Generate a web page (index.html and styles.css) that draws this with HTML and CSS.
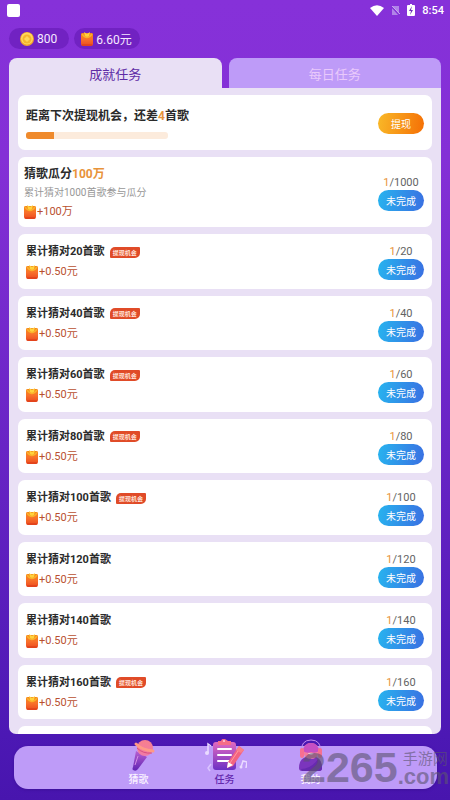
FILE: index.html
```html
<!DOCTYPE html>
<html lang="zh-CN">
<head>
<meta charset="utf-8">
<meta name="viewport" content="width=device-width, initial-scale=1">
<title>成就任务</title>
<link rel="stylesheet" href="styles.css">
</head>
<body>
<svg class="defs" aria-hidden="true">
  <defs>
    <linearGradient id="packetFill" x1="0" y1="0" x2="0" y2="1"><stop offset="0" stop-color="#f98a1c"/><stop offset=".5" stop-color="#f8702a"/><stop offset="1" stop-color="#ec4a20"/></linearGradient>
    <linearGradient id="purpleFill" x1="0" y1="0" x2="0" y2="1"><stop offset="0" stop-color="#e26ac0"/><stop offset="1" stop-color="#6c30c4"/></linearGradient>
    <linearGradient id="handleFill" x1="0" y1="0" x2="0" y2="1"><stop offset="0" stop-color="#b85fd0"/><stop offset="1" stop-color="#5f23b4"/></linearGradient>
    <linearGradient id="pinkFill" x1="0" y1="0" x2="0" y2="1"><stop offset="0" stop-color="#f8808c"/><stop offset="1" stop-color="#f07aa8"/></linearGradient>
    <symbol id="packet" viewBox="0 0 12 14">
      <rect x="0" y="1" width="12" height="13" rx="2" fill="url(#packetFill)"/>
      <path d="M0 3Q0 1 2 1H10Q12 1 12 3Q10 6 6 6Q2 6 0 3Z" fill="#f4861b"/>
      <path d="M1 2Q6 9 11 2" fill="none" stroke="#fbb02c" stroke-width="1.4"/>
      <path d="M3 0L6 2L9 0L8 4L6 5L4 4Z" fill="#ffd23c"/>
      <path d="M1 13H11" stroke="#d93a16" stroke-width="1"/>
    </symbol>
  </defs>
</svg>
<div class="app">
  <div class="status">
    <span class="status-app"></span>
    <div class="status-icons">
      <svg width="14" height="11" viewBox="0 0 14 11"><path d="M0 3Q7-2.600 14 3L7 11Z" fill="#fff"/></svg>
      <svg width="9" height="11" viewBox="0 0 9 11"><path d="M2 1H8V10H1V4Z" fill="#b184e8"/><path d="M0 1L9 11" stroke="#8430d8" stroke-width="1.500"/><path d="M1 1L9 9" stroke="#c7a5f0"/></svg>
      <svg width="8" height="12" viewBox="0 0 8 12"><path d="M2 1H3V0H5V1H7Q8 1 8 2V11Q8 12 7 12H1Q0 12 0 11V2Q0 1 1 1Z" fill="#fff"/><path d="M5 2L2 7H4L3 11L6 6H4Z" fill="#6f2cb8"/></svg>
      <span>8:54</span>
    </div>
  </div>
  <header class="wallet">
    <span class="pill"><svg width="14" height="14" viewBox="0 0 14 14"><circle cx="7" cy="7" r="7" fill="#f0a22c"/><circle cx="7" cy="6.500" r="6" fill="#ffd85b"/><circle cx="7" cy="7" r="4.500" fill="#f6b62e"/><path d="M7 4L10 7L7 10L4 7Z" fill="#ffd75a"/></svg>800</span>
    <span class="pill"><svg width="12" height="14"><use href="#packet"/></svg>6.60元</span>
  </header>
  <div class="tabs">
    <button class="tab tab-active">成就任务</button>
    <button class="tab">每日任务</button>
  </div>
  <main class="panel">
    <section class="card next">
      <div>
        <h2><label for="next-progress">距离下次提现机会，还差<em>4</em>首歌</label></h2>
        <progress id="next-progress" value="20" max="100"></progress>
      </div>
      <button class="action withdraw">提现</button>
    </section>
    <section class="card share">
      <div>
        <h2>猜歌瓜分<em>100万</em></h2>
        <p class="note">累计猜对1000首歌参与瓜分</p>
        <p class="reward"><svg width="12" height="14"><use href="#packet"/></svg>+100万</p>
      </div>
      <div class="side"><span class="count"><em>1</em>/1000</span><button class="action">未完成</button></div>
    </section>
    <div class="list">
      <section class="card"><div><h2>累计猜对20首歌<span class="tag">提现机会</span></h2><p class="reward"><svg width="12" height="14"><use href="#packet"/></svg>+0.50元</p></div><div class="side"><span class="count"><em>1</em>/20</span><button class="action">未完成</button></div></section>
      <section class="card"><div><h2>累计猜对40首歌<span class="tag">提现机会</span></h2><p class="reward"><svg width="12" height="14"><use href="#packet"/></svg>+0.50元</p></div><div class="side"><span class="count"><em>1</em>/40</span><button class="action">未完成</button></div></section>
      <section class="card"><div><h2>累计猜对60首歌<span class="tag">提现机会</span></h2><p class="reward"><svg width="12" height="14"><use href="#packet"/></svg>+0.50元</p></div><div class="side"><span class="count"><em>1</em>/60</span><button class="action">未完成</button></div></section>
      <section class="card"><div><h2>累计猜对80首歌<span class="tag">提现机会</span></h2><p class="reward"><svg width="12" height="14"><use href="#packet"/></svg>+0.50元</p></div><div class="side"><span class="count"><em>1</em>/80</span><button class="action">未完成</button></div></section>
      <section class="card"><div><h2>累计猜对100首歌<span class="tag">提现机会</span></h2><p class="reward"><svg width="12" height="14"><use href="#packet"/></svg>+0.50元</p></div><div class="side"><span class="count"><em>1</em>/100</span><button class="action">未完成</button></div></section>
      <section class="card"><div><h2>累计猜对120首歌</h2><p class="reward"><svg width="12" height="14"><use href="#packet"/></svg>+0.50元</p></div><div class="side"><span class="count"><em>1</em>/120</span><button class="action">未完成</button></div></section>
      <section class="card"><div><h2>累计猜对140首歌</h2><p class="reward"><svg width="12" height="14"><use href="#packet"/></svg>+0.50元</p></div><div class="side"><span class="count"><em>1</em>/140</span><button class="action">未完成</button></div></section>
      <section class="card"><div><h2>累计猜对160首歌<span class="tag">提现机会</span></h2><p class="reward"><svg width="12" height="14"><use href="#packet"/></svg>+0.50元</p></div><div class="side"><span class="count"><em>1</em>/160</span><button class="action">未完成</button></div></section>
    </div>
    <div class="peek"></div>
  </main>
  <nav class="nav">
    <a href="#guess"><svg width="44" height="34" viewBox="0 0 44 34">
      <path d="M19 12L30 18L21 30Q19 33 16 31Q15 30 16 28Z" fill="url(#handleFill)"/>
      <circle cx="28" cy="9" r="8" fill="url(#pinkFill)"/>
      <path d="M20 9Q26 15 35 14" fill="none" stroke="#d94f80" stroke-width="1"/>
      <path d="M19 5Q25 11 36 12" fill="none" stroke="#ff9a86" stroke-width="3" stroke-linecap="round"/>
      <path d="M21 17L18 26" stroke="#d28ce4" stroke-width="1"/>
    </svg>猜歌</a>
    <a href="#tasks" class="current"><svg width="44" height="34" viewBox="0 0 44 34">
      <rect x="10" y="3" width="23" height="28" rx="3" fill="url(#purpleFill)"/>
      <path d="M15 2H18Q19-1 22 0L25 2H28V6H15Z" fill="#f56c88"/><circle cx="21" cy="2" r="1" fill="#ffd1da"/>
      <path d="M15 10H28M15 16H28M15 22H26" stroke="#fff" stroke-width="2" stroke-linecap="round"/>
      <path d="M36 7L41 11L30 27L24 29L25 23Z" fill="#f36380"/><path d="M36 7L41 11L38 14L33 11Z" fill="#f9808a"/><path d="M25 23L30 26L24 29Z" fill="#fff"/>
      <path d="M35 12L27 24" stroke="#ff9ba2" stroke-width="1"/>
      <path d="M5 14V5L8 7" fill="none" stroke="#eadbff" stroke-width="1.500"/><circle cx="4" cy="14" r="2" fill="#eadbff"/>
      <path d="M7 32L5 29L8 25" fill="none" stroke="#dac4ff" stroke-width="1.500"/>
      <path d="M38 28L40 22L44 23L43 29" fill="none" stroke="#eadbff" stroke-width="1.500"/><circle cx="38" cy="28" r="1.500" fill="#eadbff"/>
    </svg>任务</a>
    <a href="#mine"><svg width="44" height="34" viewBox="0 0 44 34">
      <path d="M10 29Q10 20 17 18H27Q33 20 33 29Q33 32 30 32H13Q10 32 10 29Z" fill="#7b35bd"/>
      <path d="M12 30Q22 30 29 20Q33 23 33 29Q33 32 30 32H13Z" fill="#672ab0"/>
      <circle cx="22" cy="12" r="8" fill="url(#pinkFill)"/>
      <path d="M14 12Q15 4 22 4Q29 4 30 12Q26 15 22 13Q18 15 14 12Z" fill="#c74fc4"/>
      <path d="M12 13Q12 1 22 1Q32 1 32 13" fill="none" stroke="#c58cf0" stroke-width="1"/>
      <rect x="11" y="9" width="4" height="10" rx="2" fill="#f76f92"/><rect x="29" y="9" width="4" height="10" rx="2" fill="#f76f92"/>
      <path d="M19 14H25Q22 18 19 14Z" fill="#ffe1f4"/>
    </svg>我的</a>
    <div class="mark" aria-hidden="true"><span class="mark-num">2265</span><span class="mark-side"><span class="mark-cn">手游网</span><span class="mark-com">.com</span></span></div>
  </nav>
</div>
</body>
</html>
```
FILE: styles.css
```css
* { box-sizing: border-box; }
body {
  margin: 0;
  font-family: Roboto, "Noto Sans CJK SC", sans-serif;
  font-size: 11px;
  color: #2b2b2b;
}
h2, p { margin: 0; }
em { font-style: normal; color: #e8933a; }
svg { display: block; flex: none; }
button { border: 0; padding: 0; font-family: inherit; }
.defs { position: absolute; width: 0; height: 0; }

.app {
  height: 100vh;
  min-height: 640px;
  display: flex;
  flex-direction: column;
  padding: 0 9px 11px;
  background: linear-gradient(#8631d9 0%, #8430d6 20%, #4c18b4 92%, #4815ae 100%);
}

.status {
  height: 20px;
  display: flex;
  align-items: center;
  justify-content: space-between;
  color: #fff;
}
.status-app {
  width: 13px;
  height: 13px;
  margin-left: -2px;
  border-radius: 2px;
  background: #fff;
}
.status-icons {
  display: flex;
  align-items: center;
  gap: 7px;
  padding-right: -0px;
  margin-right: -3px;
  font-size: 11px;
  font-weight: 500;
}

.wallet { display: flex; gap: 5px; margin: 8px 0 9px; }
.pill {
  height: 21px;
  display: flex;
  align-items: center;
  gap: 3px;
  padding: 0 12px 0 11px;
  border-radius: 11px;
  background: #7122c2;
  color: #f6eaff;
  font-size: 12px;
}
.pill:last-child { padding: 0 8px 0 7px; }

.tabs { display: flex; gap: 7px; height: 30px; }
.tab {
  flex: 1;
  border-radius: 8px 8px 0 0;
  background: #be9bf8;
  color: #e9c9fb;
  font-size: 13px;
}
.tab-active { background: #e9e0f5; color: #5e2ca5; }

.panel {
  flex: 1;
  min-height: 0;
  display: flex;
  flex-direction: column;
  gap: 7px;
  padding: 7px 9px 0;
  overflow: hidden;
  border-radius: 0 0 7px 7px;
  background: #e9e0f5;
}
.card {
  display: flex;
  align-items: center;
  justify-content: space-between;
  padding: 2px 8px 0;
  border-radius: 7px;
  background: #fff;
}
.card h2 {
  display: flex;
  align-items: center;
  font-size: 11px;
  line-height: 16px;
  font-weight: 700;
}
.next { height: 55px; }
.next h2 { font-size: 12px; }
.share { height: 70px; padding-left: 6px; }
.share h2 { font-size: 12px; }
.list {
  flex: 1;
  min-height: 0;
  display: grid;
  grid-auto-rows: 1fr;
  gap: 7px;
}
.peek { height: 8px; border-radius: 7px 7px 0 0; background: #fff; }

progress {
  display: block;
  width: 142px;
  height: 7px;
  margin-top: 8px;
  border: 0;
  border-radius: 3px;
  overflow: hidden;
  appearance: none;
}
progress::-webkit-progress-bar { background: #fcebdc; }
progress::-webkit-progress-value { background: #ef8a2c; }

.note { color: #979797; font-size: 10px; line-height: 14px; margin-top: 4px; }
.reward {
  display: flex;
  align-items: center;
  gap: 1px;
  margin-top: 4px;
  line-height: 16px;
  color: #b9502f;
}
.tag {
  height: 11px;
  margin-left: 5px;
  padding: 0 3px;
  border-radius: 5px 1px 5px 1px;
  background: #e04b28;
  color: #ffe4da;
  font-size: 6px;
  line-height: 11px;
}

.side { display: flex; flex-direction: column; align-items: center; color: #636363; }
.count { line-height: 15px; }
.action {
  width: 46px;
  height: 21px;
  border-radius: 11px;
  background: linear-gradient(100deg, #27b4ef, #3a6fe2);
  color: #fff;
  font-size: 10px;
}
.withdraw { background: linear-gradient(100deg, #f9b928, #f56f05); }

.nav {
  position: relative;
  height: 43px;
  display: flex;
  justify-content: center;
  gap: 42px;
  margin: 12px 4px 0 5px;
  padding-right: 2px;
  border-radius: 14px;
  background: #be9bf8;
  box-shadow: 0 1px 3px #3d109a;
}
.nav a {
  width: 44px;
  display: flex;
  flex-direction: column;
  align-items: center;
  justify-content: flex-end;
  padding-bottom: 2px;
  color: #fbf3ff;
  font-size: 10px;
  line-height: 14px;
  font-weight: 500;
  text-decoration: none;
}
.nav .current { color: #6328ad; }

.mark {
  position: absolute;
  right: -12px;
  top: 0;
  height: 43px;
  display: flex;
  align-items: center;
  color: #5d5470;
  opacity: 0.6;
  font-weight: 700;
  pointer-events: none;
}
.mark-num { font-family: "Liberation Sans", sans-serif; font-size: 43px; line-height: 43px; }
.mark-side { display: flex; flex-direction: column; padding-top: 2px; }
.mark-cn { padding-left: 5px; font-size: 15px; line-height: 17px; font-weight: 400; }
.mark-com { font-family: "Liberation Sans", sans-serif; font-size: 22px; line-height: 18px; }
```
